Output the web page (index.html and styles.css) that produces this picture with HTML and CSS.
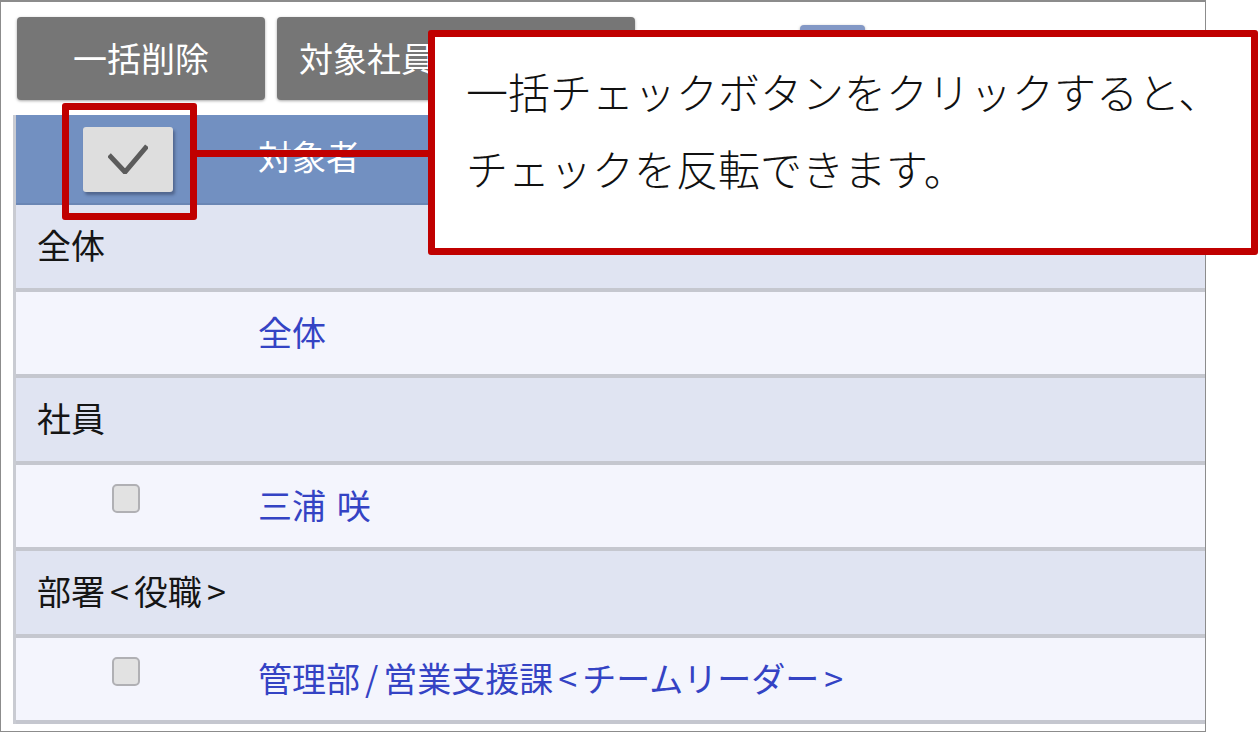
FILE: index.html
```html
<!DOCTYPE html>
<html lang="ja">
<head>
    <meta charset="utf-8">
    <title>対象者</title>
    <link rel="stylesheet" href="styles.css">
</head>
<body>
    <div class="frame">
        <div class="toolbar">
            <button class="btn">一括削除</button>
            <button class="btn btn-wide">対象社員を一括追加</button>
            <button class="btn btn-blue">追加</button>
        </div>

        <div class="list">
            <div class="list-head">
                <div class="col-check">
                    <button class="toggle" type="button">
                        <svg width="40" height="30" viewBox="0 0 40 30">
                            <polyline points="1,11 17,28 39,2" fill="none" stroke="#5b5b5b" stroke-width="5" stroke-linejoin="miter"/>
                        </svg>
                    </button>
                </div>
                <div class="col-name">対象者</div>
            </div>

            <div class="group">全体</div>
            <div class="item">
                <div class="col-check"></div>
                <a class="col-name" href="#">全体</a>
            </div>

            <div class="group">社員</div>
            <div class="item">
                <div class="col-check"><span class="box"></span></div>
                <a class="col-name" href="#">三浦<span class="gap"> </span>咲</a>
            </div>

            <div class="group">部署<span class="sym">&lt;</span>役職<span class="sym">&gt;</span></div>
            <div class="item">
                <div class="col-check"><span class="box"></span></div>
                <a class="col-name" href="#">管理部<span class="sym">/</span>営業支援課<span class="sym">&lt;</span>チームリーダー<span class="sym">&gt;</span></a>
            </div>
        </div>
    </div>

    <!-- 注釈 -->
    <div class="mark"></div>
    <div class="leader"></div>
    <div class="callout">一括チェックボタンをクリックすると、<br>チェックを反転できます。</div>
</body>
</html>
```

FILE: styles.css
```css
body {
    margin: 0;
    background: #fff;
    font-family: "Noto Sans CJK JP", "Noto Sans", sans-serif;
}

.frame {
    box-sizing: border-box;
    width: 1206px;
    height: 732px;
    margin: 0;
    border: 1px solid #8c8c8c;
    border-top-width: 2px;
    overflow: hidden;
}

.toolbar {
    display: flex;
    align-items: flex-start;
    gap: 12px;
    padding: 15px 0 0 16px;
    margin-bottom: 15px;
}

.btn {
    height: 83px;
    width: 248px;
    border: none;
    border-radius: 4px;
    background-color: #767676;
    color: #fff;
    font-family: inherit;
    font-size: 34px;
    box-shadow: 0 1px 3px rgba(0, 0, 0, 0.35);
    white-space: nowrap;
    overflow: hidden;
    padding: 0 0 3px;
}

.btn-wide {
    width: 358px;
    text-align: left;
    padding-left: 22px;
}

.btn-blue {
    width: 65px;
    height: 60px;
    margin: 8px 0 0 153px;
    background-color: #8398c6;
    font-size: 20px;
}

.list {
    margin-left: 12px;
    border-left: 3px solid #c9cbd2;
    font-size: 34px;
}

.list-head {
    display: flex;
    align-items: center;
    height: 88px;
    background-color: #7290c1;
    border-bottom: 2px solid #6a86b4;
    color: #fff;
}

.list-head .col-name {
    padding-bottom: 8px;
}

.col-check {
    flex: 0 0 226px;
    display: flex;
    justify-content: center;
    align-items: center;
}

.col-name {
    padding-left: 16px;
    white-space: nowrap;
}

.sym {
    margin: 0 5px;
}

.gap {
    margin-right: 3px;
}

.toggle {
    width: 90px;
    height: 65px;
    display: flex;
    align-items: center;
    justify-content: center;
    padding: 0;
    border: none;
    border-radius: 3px;
    background-color: #dedede;
    box-shadow: 2px 3px 3px rgba(40, 50, 80, 0.45);
    margin-right: 2px;
}

.group {
    height: 79px;
    display: flex;
    align-items: center;
    padding: 0 0 4px 21px;
    background-color: #e0e4f2;
    border-bottom: 4px solid #c5c7cf;
    color: #151515;
}

.item {
    height: 78px;
    display: flex;
    align-items: center;
    padding-bottom: 4px;
    background-color: #f4f5fd;
    border-bottom: 4px solid #c5c7cf;
}

.item a {
    color: #3443c4;
    text-decoration: none;
}

.box {
    box-sizing: border-box;
    width: 28px;
    height: 29px;
    border: 2px solid #b0b0b4;
    border-radius: 5px;
    background-color: #e2e2e2;
    margin: 0 6px 12px 0;
}

/* 注釈 */
.mark {
    position: absolute;
    left: 62px;
    top: 103px;
    width: 135px;
    height: 117px;
    box-sizing: border-box;
    border: 7px solid #c00000;
    border-radius: 3px;
}

.leader {
    position: absolute;
    left: 196px;
    top: 150px;
    width: 234px;
    height: 7px;
    background-color: #c00000;
}

.callout {
    position: absolute;
    left: 428px;
    top: 30px;
    width: 830px;
    height: 225px;
    box-sizing: border-box;
    border: 7px solid #c00000;
    border-radius: 3px;
    background-color: #fff;
    padding: 15px 0 0 31px;
    font-size: 42px;
    font-weight: 300;
    line-height: 77px;
    color: #111;
    white-space: nowrap;
}
```
